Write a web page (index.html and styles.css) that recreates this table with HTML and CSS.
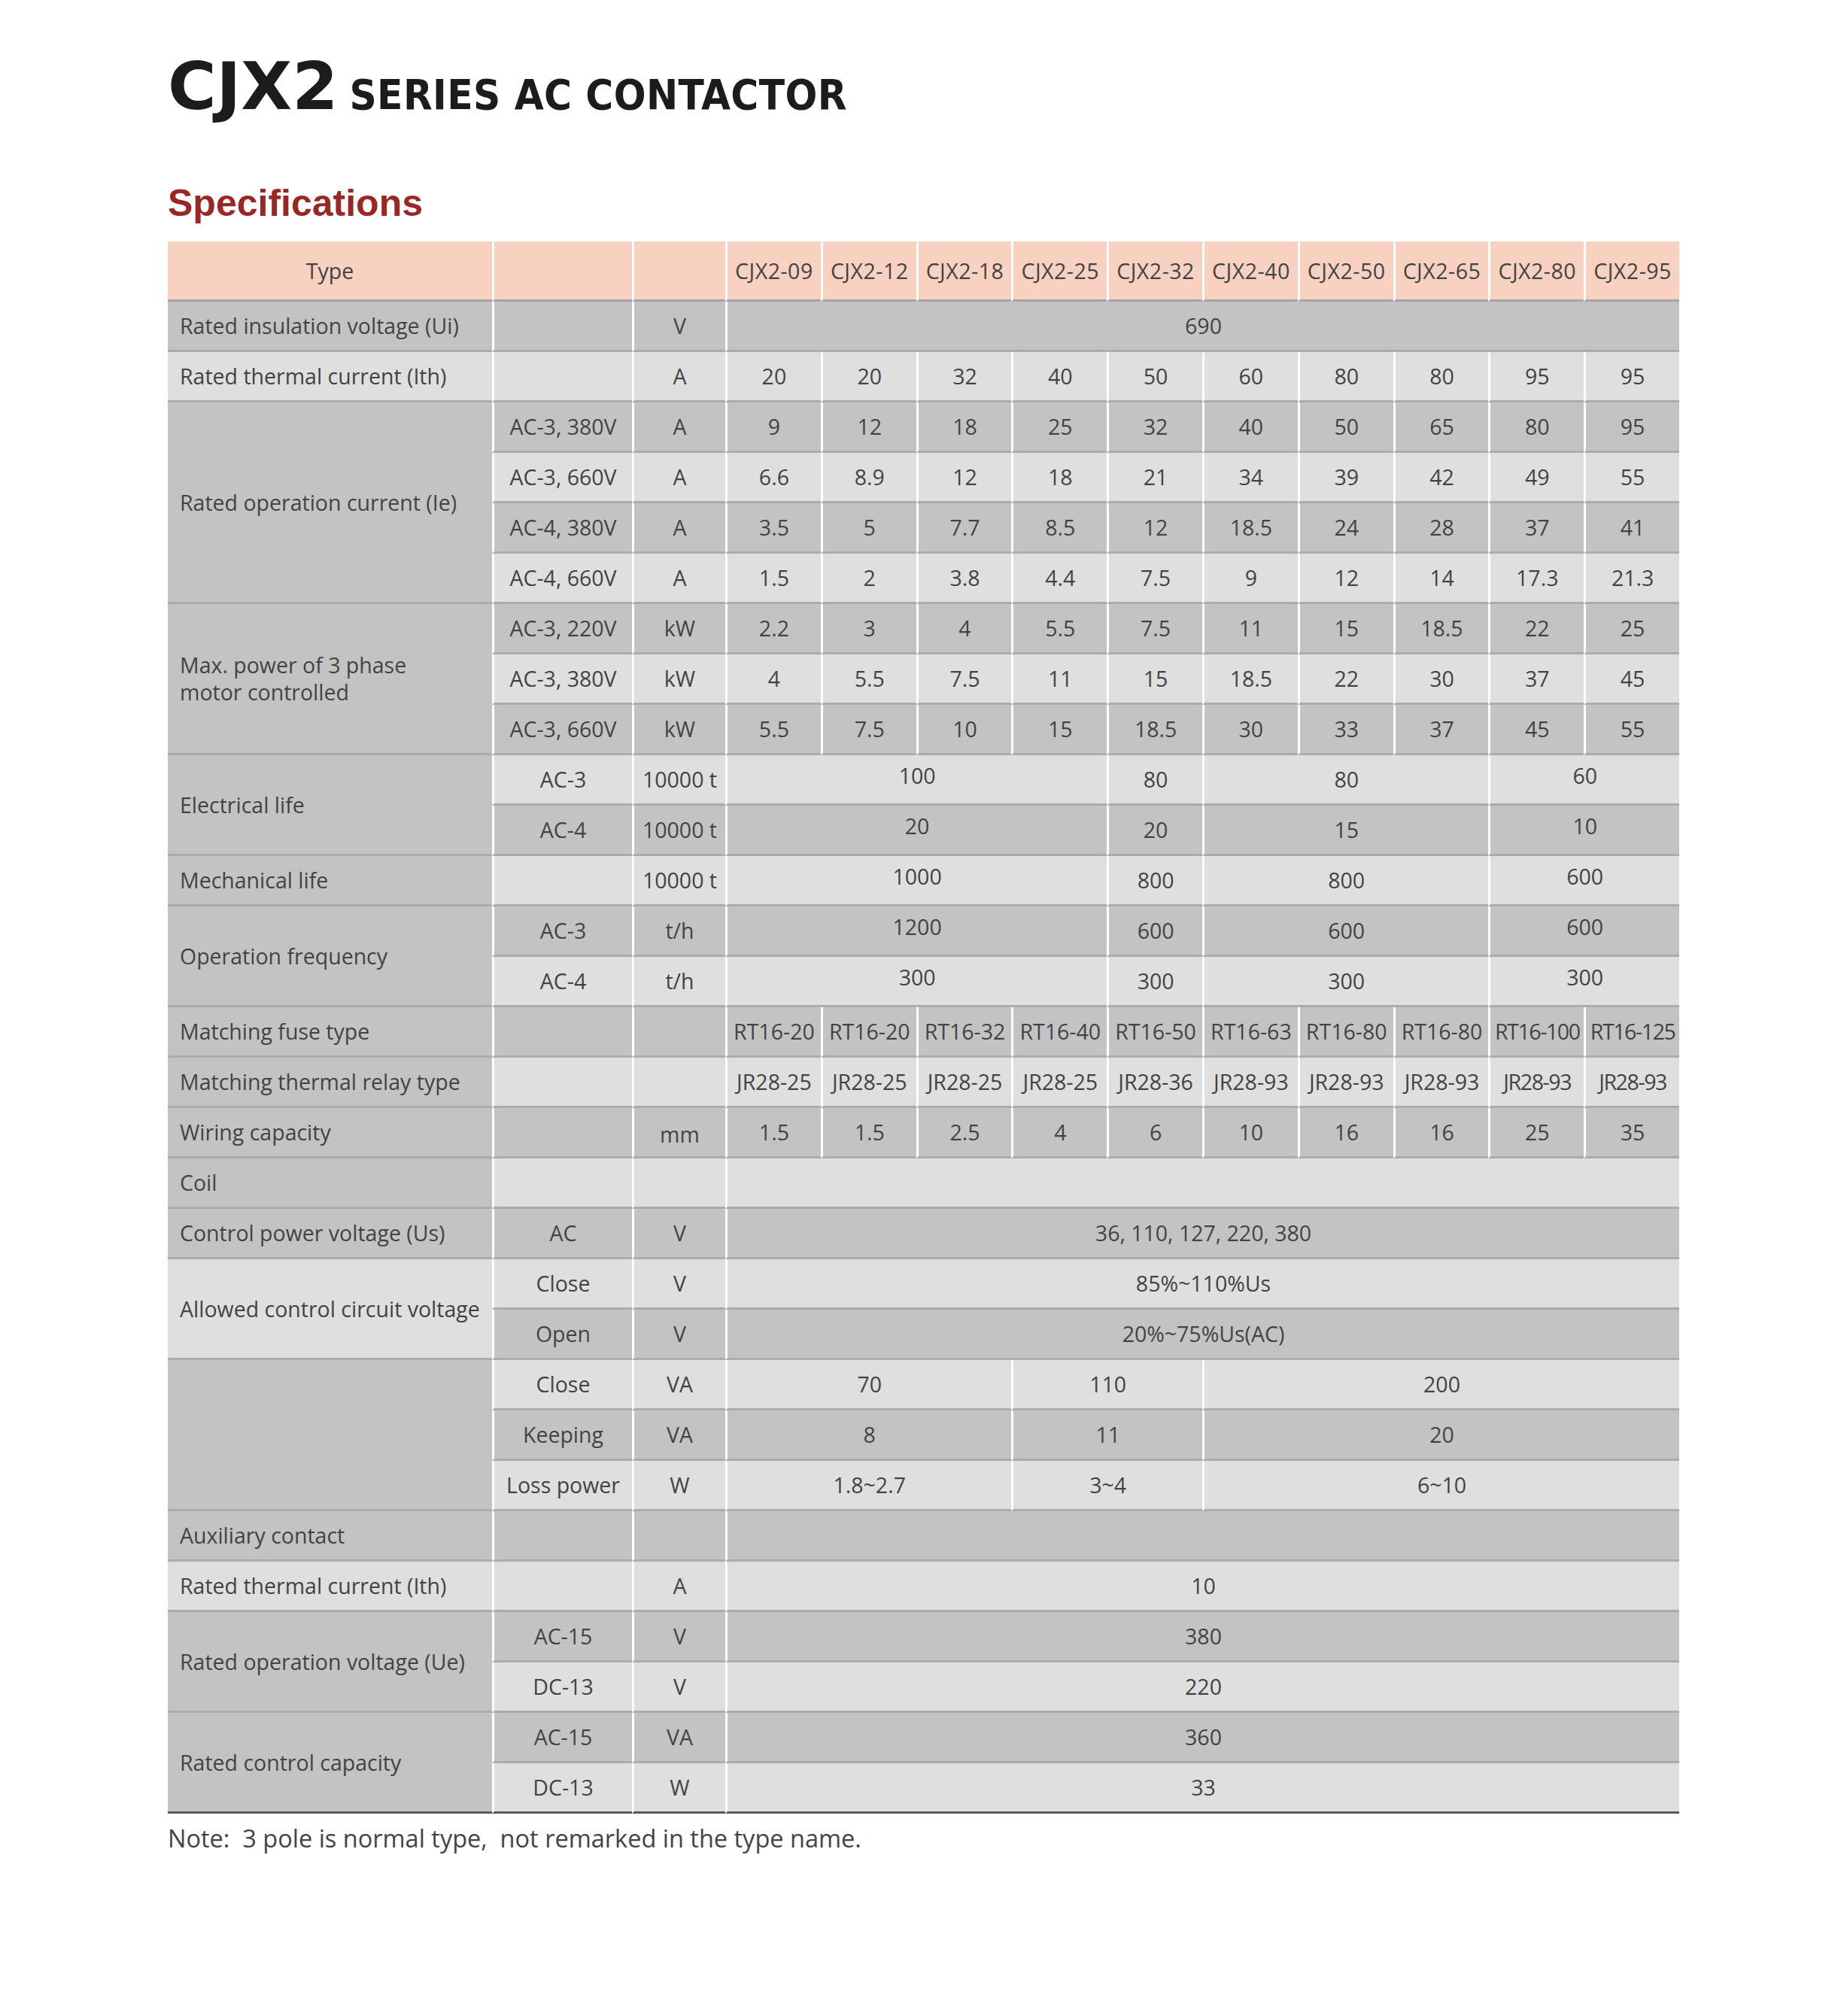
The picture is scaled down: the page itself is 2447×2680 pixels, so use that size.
FILE: index.html
```html
<!DOCTYPE html>
<html lang="en">
<head>
<meta charset="utf-8">
<title>CJX2 Series AC Contactor</title>
<link rel="stylesheet" href="styles.css">
</head>
<body>
<div class="page">
  <h1 class="title"><span class="big">CJX2</span><span class="sub">SERIES AC CONTACTOR</span></h1>
  <h2 class="spec">Specifications</h2>
  <table class="spec-table">
    <colgroup>
      <col class="w1"><col class="w2"><col class="w3">
      <col class="wd"><col class="wd"><col class="wd"><col class="wd"><col class="wd">
      <col class="wd"><col class="wd"><col class="wd"><col class="wd"><col class="wd">
    </colgroup>
    <thead>
      <tr>
        <th class="c1">Type</th><th></th><th></th>
        <th>CJX2-09</th><th>CJX2-12</th><th>CJX2-18</th><th>CJX2-25</th><th>CJX2-32</th>
        <th>CJX2-40</th><th>CJX2-50</th><th>CJX2-65</th><th>CJX2-80</th><th>CJX2-95</th>
      </tr>
    </thead>
    <tbody>
      <tr class="d">
        <td class="c1 cd">Rated insulation voltage (Ui)</td><td></td><td>V</td>
        <td colspan="10">690</td>
      </tr>
      <tr class="l">
        <td class="c1 cl">Rated thermal current (Ith)</td><td></td><td>A</td>
        <td>20</td><td>20</td><td>32</td><td>40</td><td>50</td><td>60</td><td>80</td><td>80</td><td>95</td><td>95</td>
      </tr>
      <tr class="d">
        <td class="c1 cd" rowspan="4">Rated operation current (Ie)</td><td>AC-3, 380V</td><td>A</td>
        <td>9</td><td>12</td><td>18</td><td>25</td><td>32</td><td>40</td><td>50</td><td>65</td><td>80</td><td>95</td>
      </tr>
      <tr class="l">
        <td>AC-3, 660V</td><td>A</td>
        <td>6.6</td><td>8.9</td><td>12</td><td>18</td><td>21</td><td>34</td><td>39</td><td>42</td><td>49</td><td>55</td>
      </tr>
      <tr class="d">
        <td>AC-4, 380V</td><td>A</td>
        <td>3.5</td><td>5</td><td>7.7</td><td>8.5</td><td>12</td><td>18.5</td><td>24</td><td>28</td><td>37</td><td>41</td>
      </tr>
      <tr class="l">
        <td>AC-4, 660V</td><td>A</td>
        <td>1.5</td><td>2</td><td>3.8</td><td>4.4</td><td>7.5</td><td>9</td><td>12</td><td>14</td><td>17.3</td><td>21.3</td>
      </tr>
      <tr class="d">
        <td class="c1 cd wrap" rowspan="3">Max. power of 3 phase<br>motor controlled</td><td>AC-3, 220V</td><td>kW</td>
        <td>2.2</td><td>3</td><td>4</td><td>5.5</td><td>7.5</td><td>11</td><td>15</td><td>18.5</td><td>22</td><td>25</td>
      </tr>
      <tr class="l">
        <td>AC-3, 380V</td><td>kW</td>
        <td>4</td><td>5.5</td><td>7.5</td><td>11</td><td>15</td><td>18.5</td><td>22</td><td>30</td><td>37</td><td>45</td>
      </tr>
      <tr class="d">
        <td>AC-3, 660V</td><td>kW</td>
        <td>5.5</td><td>7.5</td><td>10</td><td>15</td><td>18.5</td><td>30</td><td>33</td><td>37</td><td>45</td><td>55</td>
      </tr>
      <tr class="l">
        <td class="c1 cd" rowspan="2">Electrical life</td><td>AC-3</td><td>10000 t</td>
        <td colspan="4" class="up">100</td><td>80</td><td colspan="3">80</td><td colspan="2" class="up">60</td>
      </tr>
      <tr class="d">
        <td>AC-4</td><td>10000 t</td>
        <td colspan="4" class="up">20</td><td>20</td><td colspan="3">15</td><td colspan="2" class="up">10</td>
      </tr>
      <tr class="l">
        <td class="c1 cd">Mechanical life</td><td></td><td>10000 t</td>
        <td colspan="4" class="up">1000</td><td>800</td><td colspan="3">800</td><td colspan="2" class="up">600</td>
      </tr>
      <tr class="d">
        <td class="c1 cd" rowspan="2">Operation frequency</td><td>AC-3</td><td>t/h</td>
        <td colspan="4" class="up">1200</td><td>600</td><td colspan="3">600</td><td colspan="2" class="up">600</td>
      </tr>
      <tr class="l">
        <td>AC-4</td><td>t/h</td>
        <td colspan="4" class="up">300</td><td>300</td><td colspan="3">300</td><td colspan="2" class="up">300</td>
      </tr>
      <tr class="d">
        <td class="c1 cd">Matching fuse type</td><td></td><td></td>
        <td>RT16-20</td><td>RT16-20</td><td>RT16-32</td><td>RT16-40</td><td>RT16-50</td><td>RT16-63</td><td>RT16-80</td><td>RT16-80</td><td class="tight">RT16-100</td><td class="tight">RT16-125</td>
      </tr>
      <tr class="l">
        <td class="c1 cd">Matching thermal relay type</td><td></td><td></td>
        <td>JR28-25</td><td>JR28-25</td><td>JR28-25</td><td>JR28-25</td><td>JR28-36</td><td>JR28-93</td><td>JR28-93</td><td>JR28-93</td><td class="tight">JR28-93</td><td class="tight">JR28-93</td>
      </tr>
      <tr class="d">
        <td class="c1 cd">Wiring capacity</td><td></td><td class="low">mm</td>
        <td>1.5</td><td>1.5</td><td>2.5</td><td>4</td><td>6</td><td>10</td><td>16</td><td>16</td><td>25</td><td>35</td>
      </tr>
      <tr class="l">
        <td class="c1 cd">Coil</td><td></td><td></td>
        <td colspan="10"></td>
      </tr>
      <tr class="d">
        <td class="c1 cd">Control power voltage (Us)</td><td>AC</td><td>V</td>
        <td colspan="10">36, 110, 127, 220, 380</td>
      </tr>
      <tr class="l">
        <td class="c1 cl" rowspan="2">Allowed control circuit voltage</td><td>Close</td><td>V</td>
        <td colspan="10">85%~110%Us</td>
      </tr>
      <tr class="d">
        <td>Open</td><td>V</td>
        <td colspan="10">20%~75%Us(AC)</td>
      </tr>
      <tr class="l">
        <td class="c1 cd" rowspan="3"></td><td>Close</td><td>VA</td>
        <td colspan="3">70</td><td colspan="2">110</td><td colspan="5">200</td>
      </tr>
      <tr class="d">
        <td>Keeping</td><td>VA</td>
        <td colspan="3">8</td><td colspan="2">11</td><td colspan="5">20</td>
      </tr>
      <tr class="l">
        <td>Loss power</td><td>W</td>
        <td colspan="3">1.8~2.7</td><td colspan="2">3~4</td><td colspan="5">6~10</td>
      </tr>
      <tr class="d">
        <td class="c1 cd">Auxiliary contact</td><td></td><td></td>
        <td colspan="10"></td>
      </tr>
      <tr class="l">
        <td class="c1 cl">Rated thermal current (Ith)</td><td></td><td>A</td>
        <td colspan="10">10</td>
      </tr>
      <tr class="d">
        <td class="c1 cd" rowspan="2">Rated operation voltage (Ue)</td><td>AC-15</td><td>V</td>
        <td colspan="10">380</td>
      </tr>
      <tr class="l">
        <td>DC-13</td><td>V</td>
        <td colspan="10">220</td>
      </tr>
      <tr class="d">
        <td class="c1 cd end" rowspan="2">Rated control capacity</td><td>AC-15</td><td>VA</td>
        <td colspan="10">360</td>
      </tr>
      <tr class="l last">
        <td>DC-13</td><td>W</td>
        <td colspan="10">33</td>
      </tr>
    </tbody>
  </table>
  <p class="note">Note:&nbsp; 3 pole is normal type,&nbsp; not remarked in the type name.</p>
</div>
</body>
</html>
```

FILE: styles.css
```css
html, body {
  margin: 0;
  padding: 0;
  background: #ffffff;
}

.page {
  margin-left: 223px;
  width: 2009px;
  padding-top: 71px;
  padding-bottom: 120px;
}

.title {
  display: flex;
  align-items: baseline;
  gap: 15px;
  margin: 0;
  color: #1e1b1c;
  font-weight: bold;
}

.big {
  font-family: "DejaVu Sans", sans-serif;
  font-size: 88px;
  line-height: 1;
  font-weight: bold;
}

.sub {
  font-family: "DejaVu Sans Condensed", "DejaVu Sans", sans-serif;
  font-stretch: condensed;
  font-size: 56px;
  line-height: 1;
  font-weight: bold;
  letter-spacing: 0.4px;
}

.spec {
  margin: 86px 0 0 0;
  font-family: "Liberation Sans", Arial, sans-serif;
  font-weight: bold;
  font-size: 50px;
  line-height: 50px;
  color: #9a2724;
}

.spec-table {
  margin-top: 26px;
  border-collapse: separate;
  border-spacing: 0;
  table-layout: fixed;
  width: 2009px;
  font-family: "Open Sans", "Noto Sans", sans-serif;
  font-size: 28.5px;
  color: #434343;
}

.w1 { width: 431px; }
.w2 { width: 186px; }
.w3 { width: 124px; }
.wd { width: 126.8px; }

.spec-table th,
.spec-table td {
  padding: 0;
  text-align: center;
  vertical-align: middle;
  font-weight: normal;
  white-space: nowrap;
  border-left: 3px solid #ffffff;
  border-bottom: 3px solid #acacac;
}

.spec-table thead th {
  background: #f9d1c1;
  height: 77px;
  letter-spacing: 0.5px;
  border-bottom: 3px solid #a6a6a6;
}

.spec-table tbody tr {
  height: 67px;
}

.spec-table .c1 {
  border-left: 0;
  text-align: left;
  padding-left: 16px;
}

.spec-table thead th.c1 {
  text-align: center;
  padding-left: 0;
  letter-spacing: 0;
}

.spec-table tr.d { background: #c3c3c3; }
.spec-table tr.l { background: #dfdfdf; }

.spec-table td.cd { background: #c3c3c3; }
.spec-table td.cl { background: #dfdfdf; }

.spec-table td.wrap {
  white-space: normal;
  line-height: 36px;
}

.spec-table td.up { padding-bottom: 10px; }
.spec-table td.low { padding-top: 6px; }
.spec-table td.tight { letter-spacing: -1.4px; }

.spec-table tr.last td,
.spec-table td.end {
  border-bottom: 3px solid #595959;
}

.note {
  margin: 17px 0 0 0;
  font-family: "Open Sans", "Noto Sans", sans-serif;
  font-size: 32.5px;
  line-height: 1;
  color: #434343;
}
```
